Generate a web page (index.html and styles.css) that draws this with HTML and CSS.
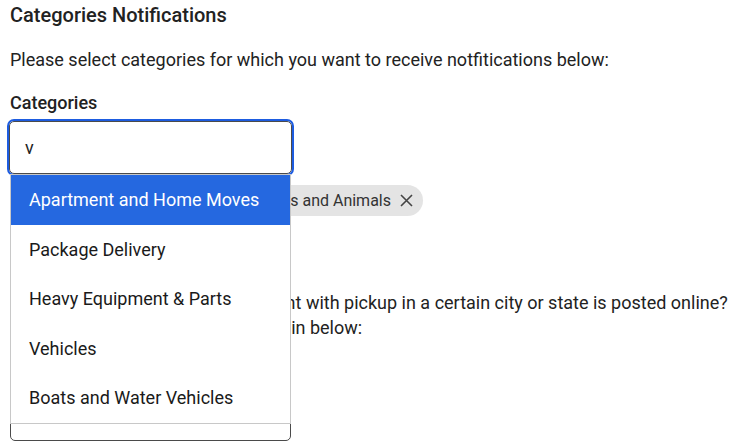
FILE: index.html
```html
<!DOCTYPE html>
<html lang="en">
<head>
    <meta charset="UTF-8">
    <title>Categories Notifications</title>
    <link rel="stylesheet" href="styles.css">
</head>
<body>
    <div class="page">
        <h2>Categories Notifications</h2>
        <p>Please select categories for which you want to receive notfitications below:</p>

        <label class="field-label">Categories</label>
        <div class="combo">
            <div class="combo-input">v</div>
            <ul class="combo-list">
                <li class="active">Apartment and Home Moves</li>
                <li>Package Delivery</li>
                <li>Heavy Equipment &amp; Parts</li>
                <li>Vehicles</li>
                <li>Boats and Water Vehicles</li>
            </ul>
        </div>
        <div class="chips">
            <span class="chip">Cars and Trucks
                <svg class="chip-x" width="13" height="13" viewBox="0 0 13 13"><path d="M1 1L12 12M12 1L1 12" stroke="#444" stroke-width="1.6" fill="none"/></svg>
            </span>
            <span class="chip">Pets and Animals
                <svg class="chip-x" width="13" height="13" viewBox="0 0 13 13"><path d="M1 1L12 12M12 1L1 12" stroke="#444" stroke-width="1.6" fill="none"/></svg>
            </span>
        </div>

        <h2 class="second">Location Notifications</h2>
        <p>Want to be notified when a shipment with pickup in a certain city or state is posted online? Please type the City or State Name in below:</p>

        <label class="field-label">Location</label>
        <div class="combo-input plain"></div>
    </div>
</body>
</html>
```

FILE: styles.css
```css
body {
    margin: 0;
    font-family: Roboto, "Liberation Sans", sans-serif;
    color: #222;
    background: #fff;
}
.page {
    padding: 3px 0 0 10px;
}
h2 {
    font-size: 20px;
    font-weight: 500;
    margin: 0;
    line-height: 24px;
}
p {
    font-size: 18px;
    margin: 20px 0 0;
    line-height: 25px;
}
.field-label {
    display: block;
    font-size: 18px;
    font-weight: 500;
    margin-top: 19px;
    line-height: 24px;
}
.combo {
    position: relative;
    margin-top: 6px;
}
.combo-input {
    box-sizing: border-box;
    height: 53px;
    width: 283px;
    margin-left: -1px;
    border: 1px solid #4a4a4a;
    border-radius: 5px;
    outline: 2px solid #1d5ce0;
    padding: 0 15px;
    font-size: 18px;
    line-height: 51px;
}
.combo-input.plain {
    outline: none;
    width: 281px;
    margin-left: 0;
    margin-top: 5px;
}
.combo-list {
    position: absolute;
    top: 53px;
    left: 0;
    width: 281px;
    box-sizing: border-box;
    margin: 0;
    padding: 0;
    list-style: none;
    background: #fff;
    border: 1px solid #c8c8c8;
    z-index: 2;
}
.combo-list li {
    height: 49.5px;
    line-height: 49.5px;
    padding-left: 18px;
    font-size: 18px;
    color: #1a1a1a;
}
.combo-list li.active {
    background: #2568e0;
    color: #fff;
}
.chips {
    display: flex;
    justify-content: flex-end;
    gap: 8px;
    width: 413px;
    margin-top: 11px;
}
.chip {
    display: flex;
    align-items: center;
    background: #e4e4e4;
    border-radius: 16px;
    height: 31px;
    padding: 0 10px 0 12px;
    font-size: 16px;
    color: #333;
    white-space: nowrap;
}
.chip-x {
    margin-left: 9px;
}
.second {
    margin-top: 30px;
}
```
